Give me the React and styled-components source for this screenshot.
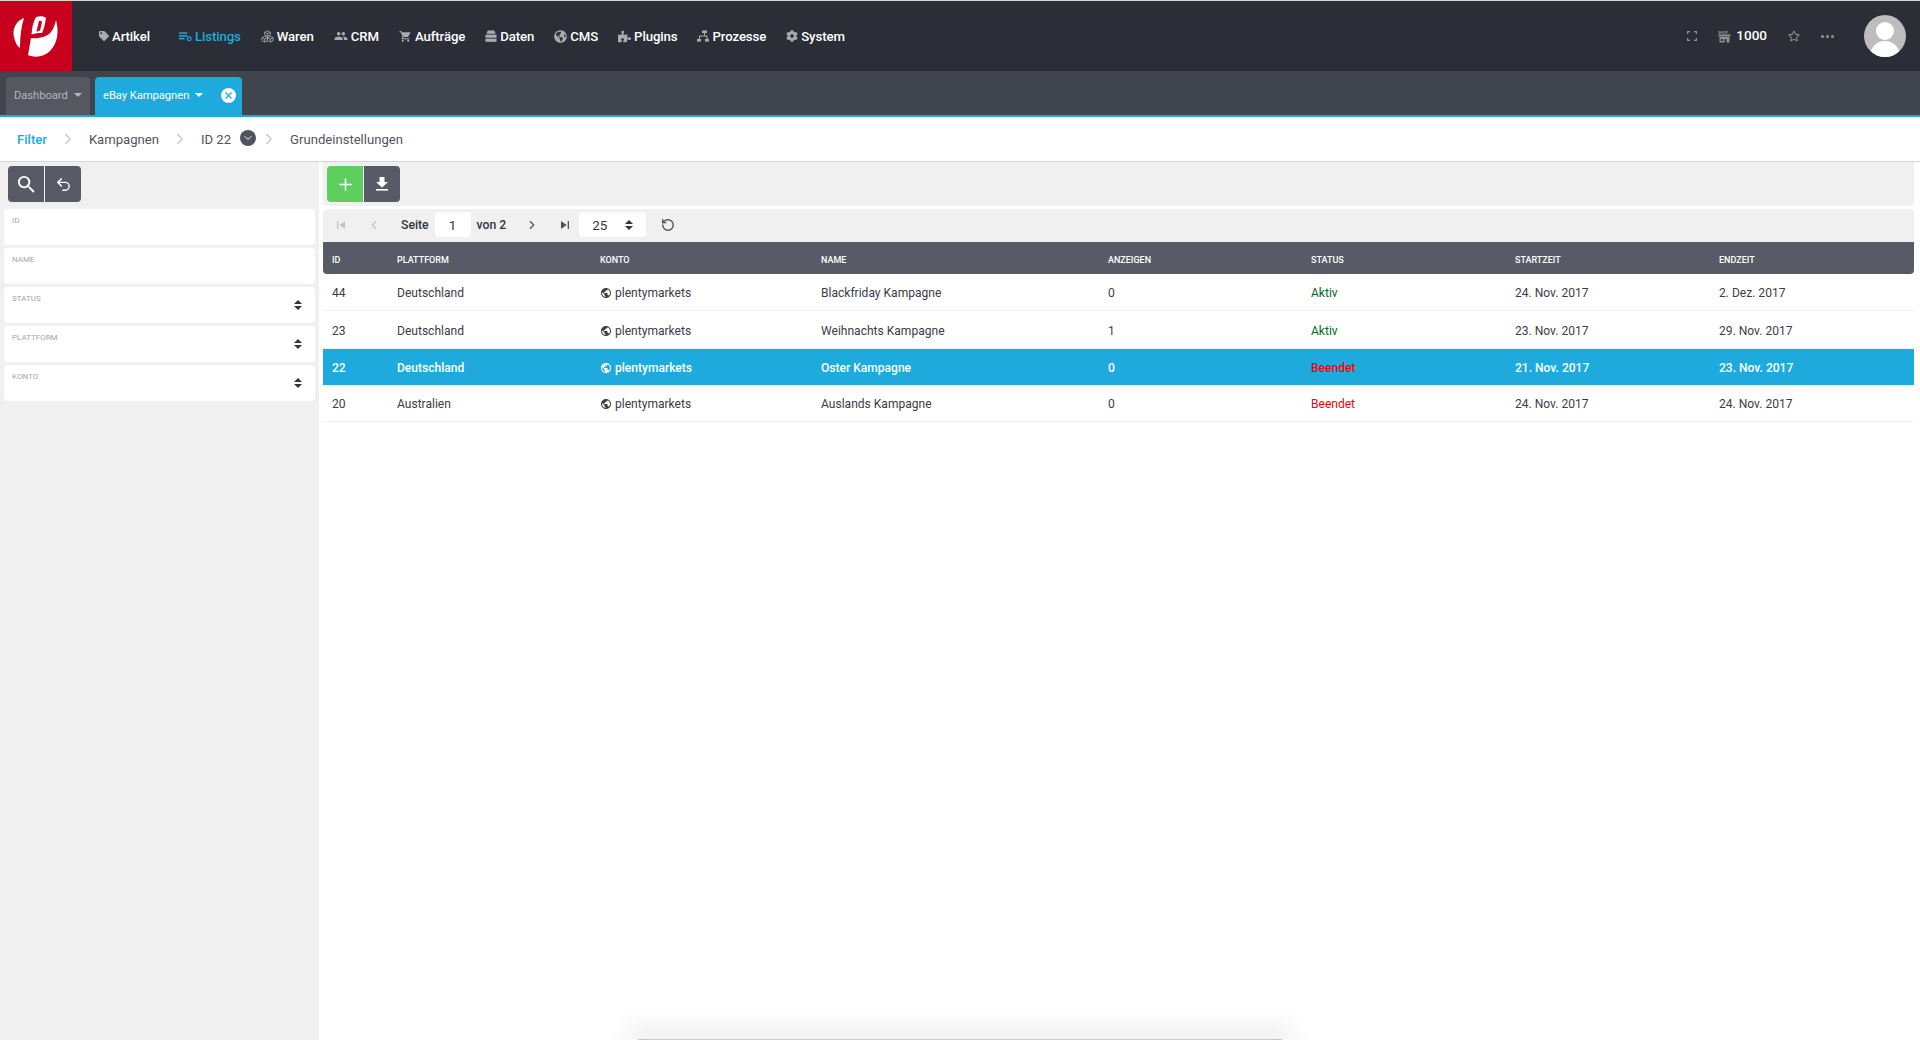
import styled, { createGlobalStyle } from 'styled-components';
import { FaTag, FaPuzzlePiece, FaCog, FaGlobeAmericas, FaRegStar } from 'react-icons/fa';
import { MdPeople, MdShoppingCart, MdSkipPrevious, MdSkipNext, MdPublic, MdSearch } from 'react-icons/md';
import { LuChevronLeft, LuChevronRight, LuUndo2, LuPlus, LuRotateCcw, LuChevronDown, LuX } from 'react-icons/lu';

const GlobalStyle = createGlobalStyle`
  html, body, #root {
    margin: 0;
    height: 100%;
    overflow: hidden;
  }
  body {
    font-family: Roboto, "Liberation Sans", sans-serif;
    font-size: 13px;
    color: #3c3c46;
    background: #fff;
  }
  * { box-sizing: border-box; }
`;

const Page = styled.div`
  height: 100vh;
  display: flex;
  flex-direction: column;
  border-top: 1px solid #d8d8d8;
`;

const TopBar = styled.header`
  height: 70px;
  flex: none;
  display: flex;
  align-items: center;
  background: #2b2e36;
`;

const LogoBox = styled.div`
  width: 72px;
  height: 70px;
  background: #c8001e;
  display: flex;
`;

const Nav = styled.nav`
  display: flex;
  align-items: center;
  gap: 20px;
  margin-left: 27px;
`;

const NavItem = styled.a`
  display: flex;
  align-items: center;
  gap: 3px;
  font-size: 13.2px;
  font-weight: 500;
  letter-spacing: -0.1px;
  color: ${p => (p.$active ? '#1eaadc' : '#fff')};
  margin-left: ${p => (p.$active ? '9px' : '0')};
  svg {
    width: ${p => p.$icon}px;
    height: ${p => p.$icon}px;
    color: ${p => (p.$active ? '#1eaadc' : '#a9abae')};
  }
`;

const TopRight = styled.div`
  margin-left: auto;
  display: flex;
  align-items: center;
  padding-right: 14px;
  color: #8f9195;
`;

const ShopNumber = styled.span`
  color: #fff;
  font-size: 13.5px;
  font-weight: 500;
  margin: 0 21px 2px 5px;
`;

const FullScreen = styled.svg`
  width: 10px;
  height: 10px;
  margin-right: 21px;
`;

const Dots = styled.span`
  display: flex;
  gap: 2px;
  margin: 0 30px 0 21px;
  i {
    width: 3px;
    height: 3px;
    border-radius: 50%;
    background: #8f9195;
  }
`;

const Avatar = styled.svg`
  width: 42px;
  height: 42px;
  border-radius: 50%;
  background: #bdbdbd;
`;

const TabBar = styled.div`
  height: 46px;
  flex: none;
  display: flex;
  align-items: flex-end;
  gap: 5px;
  padding: 0 0 0 6px;
  background: #40444d;
  border-bottom: 2px solid #1eaadc;
`;

const Tab = styled.div`
  height: 38px;
  display: flex;
  align-items: center;
  padding: 0 0 2px 8px;
  width: ${p => (p.$active ? '147px' : '84px')};
  border-radius: 4px 4px 0 0;
  font-size: 11.3px;
  letter-spacing: -0.1px;
  color: ${p => (p.$active ? '#fff' : '#b4b6ba')};
  background: ${p => (p.$active ? '#1eaadc' : '#555860')};
`;

const Caret = styled.span`
  width: 0;
  height: 0;
  margin-left: 6px;
  border-left: 4px solid transparent;
  border-right: 4px solid transparent;
  border-top: 4px solid currentColor;
`;

const TabClose = styled.span`
  width: 15px;
  height: 15px;
  margin-left: 18px;
  border-radius: 50%;
  background: #fff;
  color: #1eaadc;
  display: flex;
  align-items: center;
  justify-content: center;
`;

const Breadcrumb = styled.div`
  height: 45px;
  flex: none;
  display: flex;
  align-items: center;
  padding-left: 17px;
  background: #fff;
  border-bottom: 1px solid #d5d5d5;
  font-size: 13.1px;
  svg.sep {
    width: 18px;
    height: 18px;
    color: #c4c4c4;
    stroke-width: 1.5;
    margin: 0 12px;
  }
`;

const Crumb = styled.span`
  color: ${p => (p.$active ? '#1eaadc' : '#50535c')};
  font-weight: ${p => (p.$active ? 500 : 400)};
`;

const CrumbToggle = styled.span`
  width: 16px;
  height: 16px;
  margin: 0 -8px 2px 9px;
  border-radius: 50%;
  background: #50535c;
  color: #fff;
  display: flex;
  align-items: center;
  justify-content: center;
`;

const Body = styled.div`
  flex: 1;
  min-height: 0;
  display: flex;
`;

const Sidebar = styled.aside`
  width: 319px;
  flex: none;
  padding: 4px 4px 0;
  background: #f0f0f0;
`;

const ButtonGroup = styled.div`
  display: flex;
  gap: 1px;
  margin-left: ${p => (p.$inset ? '4px' : '0')};
`;

const IconButton = styled.button`
  width: 36px;
  height: 36px;
  padding: 0;
  border: 0;
  display: flex;
  align-items: center;
  justify-content: center;
  color: #fff;
  background: ${p => (p.$green ? '#5ccf5f' : '#585a66')};
  &:first-child { border-radius: 4px 0 0 4px; }
  &:last-child { border-radius: 0 4px 4px 0; }
`;

const FilterForm = styled.div`
  display: flex;
  flex-direction: column;
  gap: 3px;
  margin-top: 7px;
`;

const Field = styled.div`
  height: 36px;
  position: relative;
  background: #fff;
  border-radius: 4px;
  padding: 7px 8px;
  font-size: 8px;
  color: #a6a6a6;
  text-transform: uppercase;
`;

const SelectArrows = styled.span`
  display: flex;
  flex-direction: column;
  gap: 2px;
  position: ${p => (p.$inline ? 'static' : 'absolute')};
  right: 13px;
  top: 13px;
  color: #33353d;
  i {
    width: 0;
    height: 0;
    border-left: 4px solid transparent;
    border-right: 4px solid transparent;
  }
  i:first-child { border-bottom: 4px solid currentColor; }
  i:last-child { border-top: 4px solid currentColor; }
`;

const Main = styled.main`
  flex: 1;
  min-width: 0;
  padding: 0 6px 0 4px;
`;

const Toolbar = styled.div`
  height: 44px;
  display: flex;
  align-items: center;
  background: #f0f0f0;
  border-radius: 0 0 4px 4px;
`;

const Pager = styled.div`
  height: 33px;
  margin-top: 3px;
  padding-bottom: 2px;
  display: flex;
  align-items: center;
  background: #f0f0f0;
  border-radius: 4px 4px 0 0;
  color: #33353d;
`;

const PagerIcon = styled.span`
  display: flex;
  width: ${p => p.$w}px;
  justify-content: center;
  color: ${p => (p.$disabled ? '#c4c4c4' : '#50535c')};
`;

const PagerLabel = styled.span`
  margin: 0 6px 0 ${p => (p.$lead ? '13px' : '6px')};
  font-size: 12.2px;
  font-weight: 500;
`;

const PageInput = styled.span`
  width: 36px;
  height: 25px;
  display: flex;
  align-items: center;
  justify-content: center;
  background: #fff;
  border-radius: 4px;
  font-size: 13.5px;
`;

const PageSize = styled(PageInput)`
  width: 67px;
  justify-content: space-between;
  padding: 0 13px;
  margin-left: 1px;
`;

const Table = styled.table`
  width: 100%;
  table-layout: fixed;
  border-collapse: separate;
  border-spacing: 0;
`;

const HeadCell = styled.th`
  height: 32px;
  padding: 3px 0 0 9px;
  text-align: left;
  font-size: 9px;
  font-weight: 500;
  color: #fff;
  text-transform: uppercase;
  background: #585a66;
  &:first-child { border-radius: 0 0 0 4px; }
  &:last-child { border-radius: 0 0 4px 0; }
`;

const Row = styled.tr`
  color: ${p => (p.$selected ? '#fff' : '#3c3c46')};
  font-weight: ${p => (p.$selected ? 500 : 400)};
  background: ${p => (p.$selected ? '#1eaadc' : '#fff')};
  &:nth-child(2) td { height: 38px; }
`;

const Cell = styled.td`
  height: ${p => (p.$selected ? '36px' : '37px')};
  padding: 2px 0 0 9px;
  font-size: 12.05px;
  border-bottom: 1px solid ${p => (p.$selected ? '#1eaadc' : '#f0f0f0')};
`;

const Account = styled.span`
  display: inline-flex;
  align-items: center;
  gap: 3px;
  vertical-align: middle;
`;

const Status = styled.span`
  color: ${p => (p.$on ? '#006b1f' : '#f00')};
`;

const BottomShadow = styled.div`
  position: fixed;
  left: 638px;
  width: 644px;
  bottom: 0;
  height: 1px;
  background: #c8c8c8;
  box-shadow: 0 -2px 24px 10px rgba(0, 0, 0, 0.08);
`;

const navItems = [
  { label: 'Artikel', size: 10, icon: <FaTag /> },
  {
    label: 'Listings',
    size: 13,
    active: true,
    icon: (
      <svg viewBox="0 0 14 13" fill="currentColor">
        <rect x="0" y="2" width="9" height="1.6" />
        <rect x="0" y="5" width="9" height="1.6" />
        <rect x="0" y="8" width="6" height="1.6" />
        <circle cx="11" cy="9" r="2" fill="none" stroke="currentColor" strokeWidth="1.3" />
      </svg>
    ),
  },
  {
    label: 'Waren',
    size: 13,
    icon: (
      <svg viewBox="0 0 14 14" fill="none" stroke="currentColor" strokeWidth="0.9">
        <path d="M7 1l3 1.4v3L7 6.8 4 5.4v-3zM4 2.4l3 1.4 3-1.4M7 3.8v3" />
        <path d="M4 6.8l3 1.4v3.4L4 13l-3-1.4V8.2zM1 8.2l3 1.4 3-1.4M4 9.6V13" />
        <path d="M10 6.8l3 1.4v3.4L10 13l-3-1.4V8.2zM7 8.2l3 1.4 3-1.4M10 9.6V13" />
      </svg>
    ),
  },
  { label: 'CRM', size: 14, icon: <MdPeople /> },
  { label: 'Aufträge', size: 13, icon: <MdShoppingCart /> },
  {
    label: 'Daten',
    size: 12,
    icon: (
      <svg viewBox="0 0 13 13" fill="currentColor">
        <path d="M3 0.5h7l1.5 3.5h-10z" />
        <rect x="0.5" y="5" width="12" height="3.4" />
        <rect x="0.5" y="9.4" width="12" height="3.4" />
      </svg>
    ),
  },
  { label: 'CMS', size: 13, icon: <FaGlobeAmericas /> },
  { label: 'Plugins', size: 13, icon: <FaPuzzlePiece /> },
  {
    label: 'Prozesse',
    size: 12,
    icon: (
      <svg viewBox="0 0 12 12" fill="currentColor">
        <rect x="5" y="0.5" width="5" height="2.6" />
        <rect x="0" y="9" width="4" height="2.6" />
        <rect x="8" y="9" width="4" height="2.6" />
        <path d="M7 3h1v2.5h2.5V9h-1V6.5H3V9H2V5.5h5z" />
      </svg>
    ),
  },
  { label: 'System', size: 12, icon: <FaCog /> },
];

const filters = [
  { label: 'ID' },
  { label: 'Name' },
  { label: 'Status', select: true },
  { label: 'Plattform', select: true },
  { label: 'Konto', select: true },
];

const columns = [
  { label: 'ID', width: 65 },
  { label: 'Plattform', width: 203 },
  { label: 'Konto', width: 221 },
  { label: 'Name', width: 287 },
  { label: 'Anzeigen', width: 203 },
  { label: 'Status', width: 204 },
  { label: 'Startzeit', width: 204 },
  { label: 'Endzeit' },
];

const campaigns = [
  { id: 44, platform: 'Deutschland', name: 'Blackfriday Kampagne', ads: 0, on: true, start: '24. Nov. 2017', end: '2. Dez. 2017' },
  { id: 23, platform: 'Deutschland', name: 'Weihnachts Kampagne', ads: 1, on: true, start: '23. Nov. 2017', end: '29. Nov. 2017' },
  { id: 22, platform: 'Deutschland', name: 'Oster Kampagne', ads: 0, on: false, start: '21. Nov. 2017', end: '23. Nov. 2017', selected: true },
  { id: 20, platform: 'Australien', name: 'Auslands Kampagne', ads: 0, on: false, start: '24. Nov. 2017', end: '24. Nov. 2017' },
];

const App = () => (
  <Page>
    <GlobalStyle />
    <TopBar>
      <LogoBox>
        <svg width="72" height="70" viewBox="0 0 72 70" fill="#fff">
          <path d="M24 17C16 20 12 28 14 36C15 41 17 45 20 47C20 36 21 26 24 17Z" />
          <path
            fillRule="evenodd"
            d="M36 16C40 15 44 15 46 17C45 23 44 28 42 32C38 32 35 32 31.5 33.5C32 27 33 21 36 16ZM39 20C38 24 37 28 36.5 31C37.5 30 39 30 40 29.5C41 26 41.5 23 42 20.5C41 19.5 40 19.5 39 20Z"
          />
          <path d="M56 19C59 30 58 42 50 50C44 56 35 57 28 54C29 48 30 43 31 37C38 38 47 36 51 31C54 27 55 23 56 19Z" />
        </svg>
      </LogoBox>
      <Nav>
        {navItems.map(item => (
          <NavItem key={item.label} $active={item.active} $icon={item.size}>
            {item.icon}
            {item.label}
          </NavItem>
        ))}
      </Nav>
      <TopRight>
        <FullScreen viewBox="0 0 10 10" fill="none" stroke="currentColor" strokeWidth="1.2">
          <path d="M0.6 3V0.6H3M7 0.6H9.4V3M9.4 7V9.4H7M3 9.4H0.6V7" />
        </FullScreen>
        <svg width="13" height="13" viewBox="0 0 13 13" fill="currentColor">
          <text x="0" y="3.5" fontSize="3.8" fontFamily="Roboto, sans-serif" fontWeight="700">SHOP</text>
          <rect x="0.5" y="4.5" width="12" height="2" />
          <path d="M1.5 7h10v5.5h-3V9H6.5v3.5h-5zM2.8 9v2H5V9z" />
        </svg>
        <ShopNumber>1000</ShopNumber>
        <FaRegStar size={12} />
        <Dots>
          <i />
          <i />
          <i />
        </Dots>
        <Avatar viewBox="0 0 42 42" fill="#fff">
          <circle cx="21" cy="16" r="9" />
          <path d="M6 42C6 32 13 26 21 26C29 26 36 32 36 42Z" />
        </Avatar>
      </TopRight>
    </TopBar>

    <TabBar>
      <Tab>
        Dashboard
        <Caret />
      </Tab>
      <Tab $active>
        eBay Kampagnen
        <Caret />
        <TabClose>
          <LuX size={11} strokeWidth={2.5} />
        </TabClose>
      </Tab>
    </TabBar>

    <Breadcrumb>
      <Crumb $active>Filter</Crumb>
      <LuChevronRight className="sep" />
      <Crumb>Kampagnen</Crumb>
      <LuChevronRight className="sep" />
      <Crumb>ID 22</Crumb>
      <CrumbToggle>
        <LuChevronDown size={12} />
      </CrumbToggle>
      <LuChevronRight className="sep" />
      <Crumb>Grundeinstellungen</Crumb>
    </Breadcrumb>

    <Body>
      <Sidebar>
        <ButtonGroup $inset>
          <IconButton>
            <MdSearch size={23} />
          </IconButton>
          <IconButton>
            <LuUndo2 size={17} />
          </IconButton>
        </ButtonGroup>
        <FilterForm>
          {filters.map(f => (
            <Field key={f.label}>
              {f.label}
              {f.select && (
                <SelectArrows>
                  <i />
                  <i />
                </SelectArrows>
              )}
            </Field>
          ))}
        </FilterForm>
      </Sidebar>

      <Main>
        <Toolbar>
          <ButtonGroup $inset>
            <IconButton $green>
              <LuPlus size={19} />
            </IconButton>
            <IconButton>
              <svg width="16" height="16" viewBox="0 0 16 16" fill="currentColor">
                <path d="M5.5 1h5v5h3.5L8 11.5 2 6h3.5z" />
                <rect x="2" y="13" width="12" height="1.6" />
              </svg>
            </IconButton>
          </ButtonGroup>
        </Toolbar>
        <Pager>
          <PagerIcon $w={36} $disabled>
            <MdSkipPrevious size={16} />
          </PagerIcon>
          <PagerIcon $w={29} $disabled>
            <LuChevronLeft size={14} />
          </PagerIcon>
          <PagerLabel $lead>Seite</PagerLabel>
          <PageInput>1</PageInput>
          <PagerLabel>von 2</PagerLabel>
          <PagerIcon $w={40}>
            <LuChevronRight size={14} />
          </PagerIcon>
          <PagerIcon $w={26}>
            <MdSkipNext size={16} />
          </PagerIcon>
          <PageSize>
            25
            <SelectArrows $inline>
              <i />
              <i />
            </SelectArrows>
          </PageSize>
          <PagerIcon $w={44}>
            <LuRotateCcw size={14} strokeWidth={2.4} />
          </PagerIcon>
        </Pager>
        <Table>
          <colgroup>
            {columns.map(c => (
              <col key={c.label} width={c.width} />
            ))}
          </colgroup>
          <thead>
            <tr>
              {columns.map(c => (
                <HeadCell key={c.label}>{c.label}</HeadCell>
              ))}
            </tr>
          </thead>
          <tbody>
            {campaigns.map(c => (
              <Row key={c.id} $selected={c.selected}>
                <Cell $selected={c.selected}>{c.id}</Cell>
                <Cell $selected={c.selected}>{c.platform}</Cell>
                <Cell $selected={c.selected}>
                  <Account>
                    <MdPublic size={12} />
                    plentymarkets
                  </Account>
                </Cell>
                <Cell $selected={c.selected}>{c.name}</Cell>
                <Cell $selected={c.selected}>{c.ads}</Cell>
                <Cell $selected={c.selected}>
                  <Status $on={c.on}>{c.on ? 'Aktiv' : 'Beendet'}</Status>
                </Cell>
                <Cell $selected={c.selected}>{c.start}</Cell>
                <Cell $selected={c.selected}>{c.end}</Cell>
              </Row>
            ))}
          </tbody>
        </Table>
      </Main>
    </Body>
    <BottomShadow />
  </Page>
);

export default App;
